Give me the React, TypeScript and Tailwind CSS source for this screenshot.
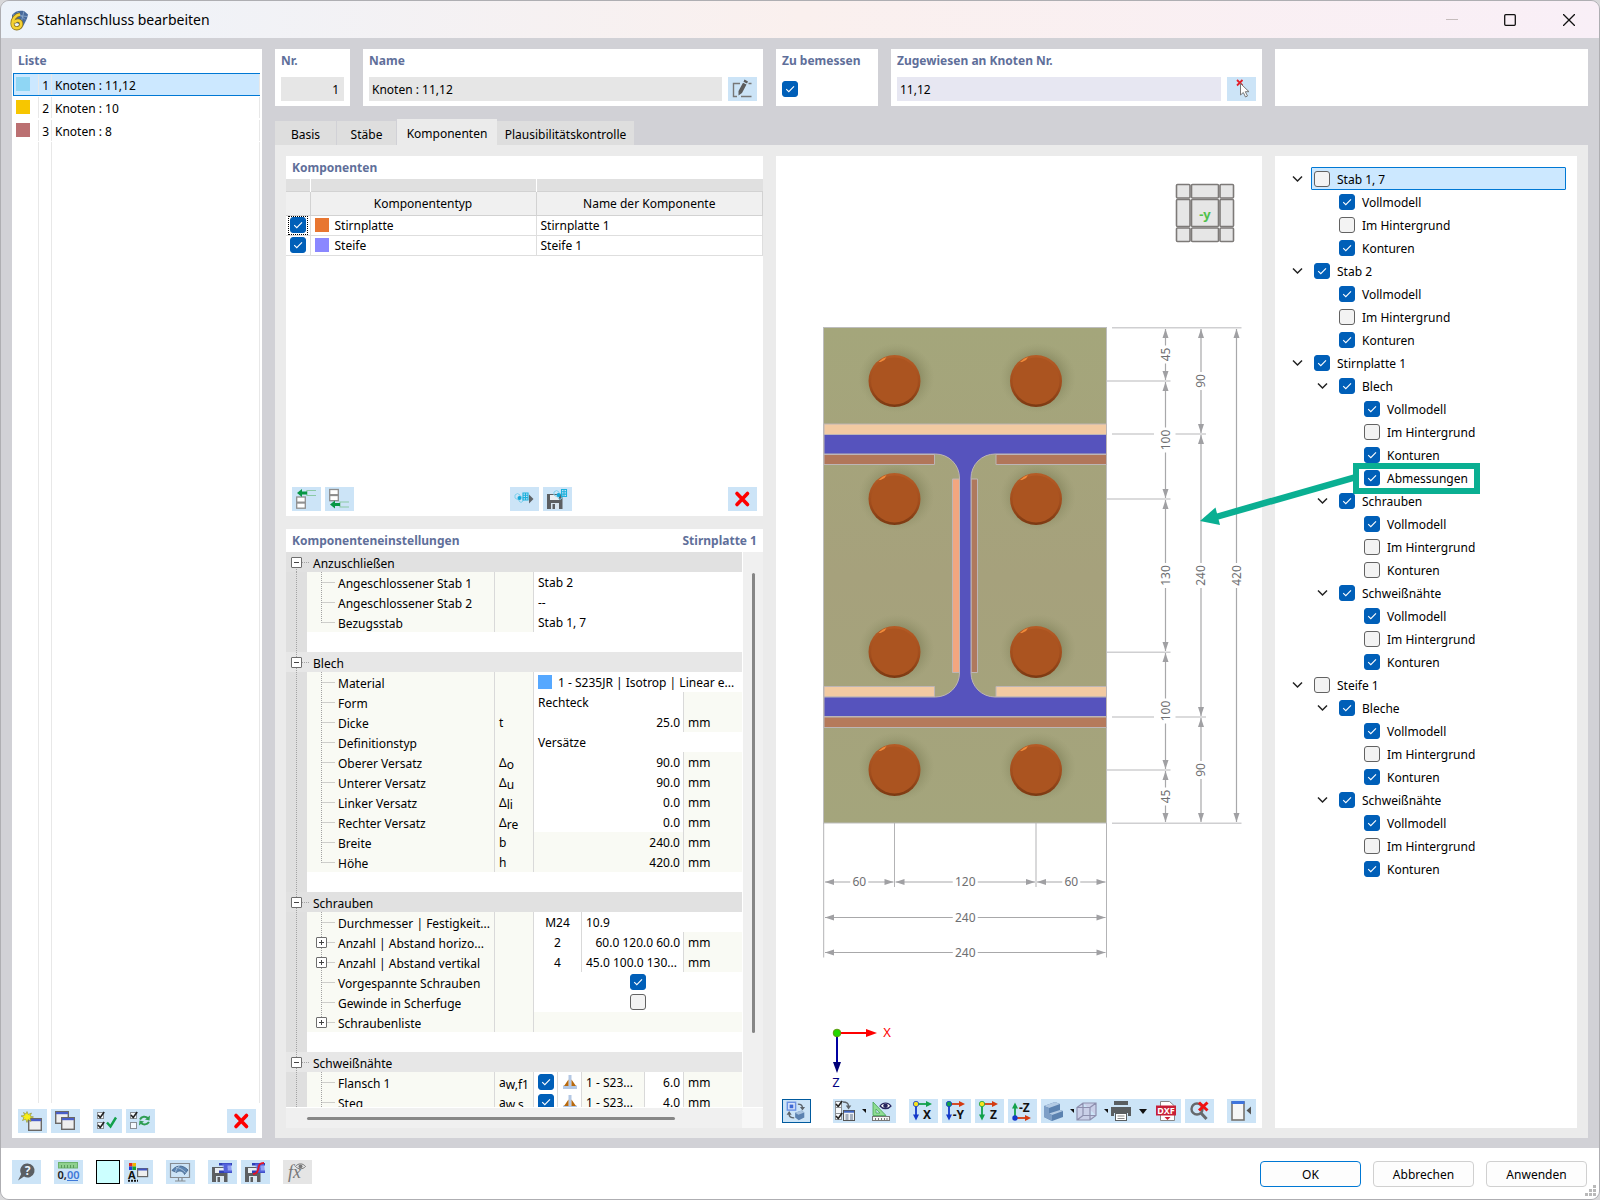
import { useState } from "react";
import type { ReactNode } from "react";

interface CheckProps {
  id?: string;
  label?: string;
  checked?: boolean;
}

const Check = ({ id, label, checked = false }: CheckProps) => {
  const [value, setValue] = useState(checked);
  return (
    <span className="relative block size-4 shrink-0">
      <input
        type="checkbox"
        id={id}
        aria-label={label}
        checked={value}
        onChange={(e) => setValue(e.target.checked)}
        className="block size-4 appearance-none rounded-[3px] border border-[#626262] bg-[#f3f3f3] checked:border-[#005fb8] checked:bg-[#005fb8]"
      />
      {value && (
        <svg viewBox="0 0 16 16" className="pointer-events-none absolute inset-0 size-4">
          <path d="M4.2 8.2 6.8 10.7 12 5.3" fill="none" stroke="#fff" strokeWidth="1.1" />
        </svg>
      )}
    </span>
  );
};

interface IconButtonProps {
  title: string;
  children: ReactNode;
  className?: string;
}

const IconButton = ({ title, children, className = "bg-[#cce4f7]" }: IconButtonProps) => (
  <button type="button" title={title} className={`block h-6 w-[29px] shrink-0 ${className}`}>
    <svg viewBox="0 0 29 24" className="block h-full w-full" fill="none">
      {children}
    </svg>
  </button>
);

/* ---------- icon drawings, all on a 29x24 field ---------- */

const DeleteIcon = () => (
  <path d="M9 6.5 19.5 17.5M19.5 6.5 9 17.5" stroke="#fe0000" strokeWidth="3.6" strokeLinecap="round" />
);

const MiniWindow = ({ x, y }: { x: number; y: number }) => (
  <g>
    <rect x={x + 0.7} y={y + 0.7} width="12.6" height="11.6" fill="#efefef" stroke="#6a6866" strokeWidth="1.4" />
    <rect x={x + 1} y={y + 1} width="12" height="2.2" fill="#4a5ec8" />
  </g>
);

const NewIcon = () => (
  <>
    <MiniWindow x={10} y={9} />
    <path
      d="M9 2.5 10.2 5.5 13.500 4 12 7 15.500 8 12 9.200 13 12.500 10 10.500 9 13.500 7.700 10.200 4.500 11.500 6 8.500 3 7 6.700 6.200 5.500 3.500 8 5Z"
      fill="#f8ef16"
      stroke="#8c8b35"
      strokeWidth="0.6"
    />
  </>
);

const CopyIcon = () => (
  <>
    <MiniWindow x={4} y={2} />
    <MiniWindow x={10} y={8} />
  </>
);

const TinyBox = ({ x, y, on = true }: { x: number; y: number; on?: boolean }) => (
  <g>
    <rect x={x + 0.5} y={y + 0.5} width="6" height="6" fill="#f5f9fc" stroke="#8a8f94" />
    {on && <path d={`M${x + 1} ${y + 3}l2.200 2.500 4-5.500`} stroke="#222" strokeWidth="1.6" />}
  </g>
);

const CheckAllIcon = () => (
  <>
    <TinyBox x={4} y={3} />
    <TinyBox x={4} y={13} />
    <path d="M14 13.5 17.500 17.500 23 8.500" stroke="#12a14b" strokeWidth="2.4" />
  </>
);

const InvertIcon = () => (
  <>
    <TinyBox x={4} y={3} />
    <TinyBox x={4} y={13} on={false} />
    <path d="M14 10.500C15.500 7 19.500 7 22 9M23 13C21 16 17.500 16 15 14" stroke="#2e9d53" strokeWidth="2" />
    <path d="M24 6.500 23.500 11.500 19 10.500ZM13 16.500 13.500 11.500 18 12.500Z" fill="#2e9d53" />
  </>
);

const RowBoxes = ({ ys }: { ys: number[] }) => (
  <>
    {ys.map((y) => (
      <rect key={y} x="4.700" y={y} width="8.600" height="5.200" fill="#fff" stroke="#8d8d8d" strokeWidth="1.3" />
    ))}
  </>
);

const InsertAboveIcon = () => (
  <>
    <RowBoxes ys={[10, 16]} />
    <path d="M24 3.500h-9v5h9" stroke="#8bc9a5" strokeWidth="1.2" />
    <path d="M5 6 10 2v2.500h5v3h-5V10Z" fill="#079744" />
  </>
);

const InsertBelowIcon = () => (
  <>
    <RowBoxes ys={[2.5, 8.5]} />
    <path d="M24 15h-9v5h9" stroke="#8bc9a5" strokeWidth="1.2" />
    <path d="M5 17.500 10 13.500V16h5v3h-5v2.500Z" fill="#079744" />
  </>
);

const Grid = ({ x, y }: { x: number; y: number }) => (
  <path
    d={`M${x} ${y}h5v7h-5zM${x + 2.5} ${y}v7M${x} ${y + 2.3}h5M${x} ${y + 4.6}h5`}
    stroke="#1bb1dd"
    strokeWidth="1.1"
  />
);

const Blocks = ({ x, y }: { x: number; y: number }) => (
  <>
    <path
      d={`M${x} ${y}l2.500-1.500 2.500 1.500v3l-2.500 1.500-2.500-1.500zM${x + 4} ${y + 3}l2-1.500 2 1.500v3l-2 1.500-2-1.500z`}
      stroke="#7ed0ec"
      strokeWidth="1"
    />
    <circle cx={x + 4.5} cy={y + 3} r="2" fill="#12a7d8" />
  </>
);

const ImportIcon = () => (
  <>
    <Blocks x={5} y={8} />
    <Grid x={13} y={6} />
    <path d="M19 7.500 23.500 12 19 16.500Z" fill="#5f6468" />
  </>
);

const Floppy = () => (
  <>
    <path d="M4 7h14l1.500 1.500V22H4Z" fill="#5c5f62" />
    <rect x="7" y="8" width="9" height="5" fill="#e9eef2" />
    <rect x="8" y="16" width="8" height="6" fill="#d9e6f0" />
    <rect x="9.500" y="17" width="2.500" height="5" fill="#5c5f62" />
  </>
);

const SaveBlockIcon = () => (
  <>
    <Floppy />
    <Blocks x={11} y={5} />
    <Grid x={18.5} y={2.5} />
  </>
);

const EditIcon = () => (
  <>
    <path d="M12 6.500H5.500v13H9M13 19.500h10.500M20.500 6.500h3" stroke="#777" strokeWidth="1.4" />
    <path d="M16.500 2.500 20 4.500 19 6.500 15.500 4.700ZM15 5.700 18.500 7.500 14 16 10.500 18.500 10.500 14Z" fill="#5c5c5c" />
  </>
);

const PickIcon = () => (
  <>
    <path d="M10 3 15.500 8.500M15.500 3 10 8.500" stroke="#e3202a" strokeWidth="1.8" />
    <path d="M13.500 6.500v11.500l2.800-2.500 2.200 4.500 2-1-2.200-4.300h3.700Z" fill="#fff" stroke="#777" strokeWidth="1" />
  </>
);

const HelpIcon = () => (
  <>
    <path d="M15.500 3.500a7 7 0 1 1-3.500 13l-6 4 3.200-6.500A7 7 0 0 1 15.500 3.500Z" fill="#5b5f63" />
    <text x="15.500" y="15" fontSize="12" fontWeight="700" textAnchor="middle" fill="#e9f3fb">
      ?
    </text>
  </>
);

const UnitsIcon = () => (
  <>
    <rect x="4.500" y="2.500" width="19" height="5.500" fill="#8fd08e" stroke="#6bb26c" />
    <path d="M7.500 5v3M10.500 5v3M13.500 5v3M16.500 5v3M19.500 5v3" stroke="#5a9c5b" />
    <text x="3.500" y="18.500" fontSize="11" fontWeight="600" fill="#222">
      0,
      <tspan fill="#3f79d8">00</tspan>
    </text>
    <path d="M13 20.500h11" stroke="#3f79d8" />
  </>
);

const DisplayPropsIcon = () => (
  <>
    <path d="M5 3h3.500v3.500H5z" fill="#e12a20" />
    <path d="M8.500 3H12v3.500H8.500z" fill="#f2b400" />
    <path d="M5 6.500h3.500V10H5z" fill="#2040d8" />
    <path d="M8.500 6.500H12V10H8.500z" fill="#18a22c" />
    <text x="4" y="19" fontSize="11" fontWeight="700" fill="#111">
      A
    </text>
    <path d="M4 20.700h10" stroke="#111" strokeWidth="2" strokeDasharray="2 1" />
    <rect x="13.600" y="8.600" width="10" height="8" fill="#eee" stroke="#666" strokeWidth="1.200" />
    <path d="M14 9.500h9" stroke="#3f55c4" strokeWidth="2" />
  </>
);

const MonitorIcon = () => (
  <>
    <path d="M4.500 3.500h19v14h-19zM12.500 18v2.500M16 18v2.500M9 21h10.500" stroke="#868c92" strokeWidth="1.2" />
    <path d="M6 10.500C9 6 16 3.500 22 10L18.500 14.500c-1-3-5-5-8-2Z" fill="#5d86b3" stroke="#3f5f85" strokeWidth="0.8" />
    <path d="M10 7.500c3 0 7 2 9.500 5M14 5.500c-3 2-4 4-4.500 7" stroke="#b7cbe0" strokeWidth="0.8" />
  </>
);

const SaveProfileIcon = ({ red = false }: { red?: boolean }) => (
  <>
    <Floppy />
    <path d="M11 3h13v2.500h-4.500v5H24V13H11v-2.500h5v-5h-5Z" fill="#2f3fb8" />
    <path d="M14 3.500h9l1 9h-8Z" fill="#6c78f2" opacity="0.6" />
    {red && <path d="M23 3c-6 0-5 4-6 7s-2 4-5 4" stroke="#e0142a" strokeWidth="1.8" />}
  </>
);

const FormulaIcon = () => (
  <>
    <text x="5" y="18" fontSize="18" fontStyle="italic" className="font-['Liberation_Serif',serif]" fill="#777">
      fx
    </text>
    <path d="M12.500 6.500c2.500-3.500 7.500-3.500 10 0-2.500 3-7.500 3-10 0Z" fill="#e4e4e4" stroke="#777" />
    <circle cx="17.500" cy="6.300" r="1.900" fill="#777" />
  </>
);

const SwapViewIcon = () => (
  <>
    <rect x="4.500" y="2.500" width="9" height="8.500" fill="#dbe6fa" stroke="#6d94e4" strokeWidth="1.6" />
    <path d="M7 5h4v4H7z" fill="#3d69d4" />
    <path d="M16 4.500c3.500 0 5 1.500 5 4M12 19.500c-4 0-5.500-1-5.500-4" stroke="#5d646b" strokeWidth="1.5" />
    <path d="M18.300 7.500h5.500L21 11.500ZM3.700 16h5.500l-2.700-4Z" fill="#5d646b" />
    <path d="M13 14 20 11.500l3 2v5.500L17 22l-4-3Z" fill="#5b82b0" />
    <path d="M13 14 20 11.500l3 2-6.500 2.500Z" fill="#a9c3df" />
  </>
);

const ListViewIcon = () => (
  <>
    <TinyBox x={2} y={2} />
    <TinyBox x={2} y={8} on={false} />
    <TinyBox x={2} y={14} />
    <path d="M10 3c4 0 5.500 1.500 5.500 4" stroke="#5d646b" strokeWidth="1.4" />
    <path d="M12.800 6.500h5.500L15.500 10.500Z" fill="#5d646b" />
    <rect x="10.500" y="11.500" width="11" height="10" fill="#eef2f5" stroke="#555" />
    <path d="M11 12.700h10" stroke="#3f66c0" strokeWidth="2" />
    <path d="M12.500 16h3M17 16h3M12.500 18h3M17 18h3M12.500 20h3M17 20h3" stroke="#5a6d86" />
  </>
);

const RulerIcon = () => (
  <>
    <path d="M6 3v13.500h13Z" fill="#8fdc93" stroke="#43a350" strokeWidth="0.8" />
    <path d="M9 10v4h4Z" fill="#cce4f7" stroke="#43a350" strokeWidth="0.7" />
    <rect x="5.500" y="17.500" width="17" height="4" fill="#f5f5f5" stroke="#777" />
    <path d="M8.500 19v3M11.500 19v3M14.500 19v3M17.500 19v3M20 19v3" stroke="#777" />
    <path d="M13 7c3-4 8-4 11 0-3 3.500-8 3.500-11 0Z" fill="#fff" stroke="#25255e" strokeWidth="1.2" />
    <circle cx="18.500" cy="6.800" r="2.300" fill="#25255e" />
  </>
);

interface AxisIconProps {
  label: string;
  dot: string;
  across: string;
  down: string;
  up?: boolean;
}

const AxisIcon = ({ label, dot, across, down, up = false }: AxisIconProps) =>
  up ? (
    <>
      <path d="M7 19V8" stroke={down} strokeWidth="1.8" />
      <path d="M4 9.500h6L7 3.500Z" fill={down} />
      <path d="M7 19h11" stroke={across} strokeWidth="1.8" />
      <path d="M17 16v6l6-3Z" fill={across} />
      <circle cx="7" cy="19" r="2.700" fill={dot} />
      <text x="11" y="13" fontSize="12" fontWeight="700" fill="#111">
        {label}
      </text>
    </>
  ) : (
    <>
      <path d="M7 5v11" stroke={down} strokeWidth="1.8" />
      <path d="M4 15.500h6L7 21.500Z" fill={down} />
      <path d="M7 5h11" stroke={across} strokeWidth="1.8" />
      <path d="M17 2v6l6-3Z" fill={across} />
      <circle cx="7" cy="5" r="2.700" fill={dot} stroke={down} strokeWidth="0.8" />
      <text x="22" y="20" fontSize="12" fontWeight="700" textAnchor="end" fill="#111">
        {label}
      </text>
    </>
  );

const SolidIcon = () => (
  <>
    <path d="M3 7 14 3l5 2v6l3 1v6l-11 4-8-4Z" fill="#5b82b0" />
    <path d="M3 7 14 3l5 2-11 4ZM8 14.500 19 11l3 1-11 4Z" fill="#b3cbe4" />
    <path d="M3 7l5 2v5.500l3 1.500v6l-8-4Z" fill="#7d9fc7" />
  </>
);

const WireCubeIcon = () => (
  <path
    d="M2 8.500 8 4h13v12.500L15 21H2ZM2 8.500h13V21M15 8.500 21 4M8 4v12.500h13M8 16.500 2 21"
    fill="#c9cfe8"
    stroke="#8d8fae"
    strokeWidth="1.2"
  />
);

const PrinterIcon = () => (
  <>
    <rect x="5" y="2" width="14" height="4" fill="#595d60" />
    <path d="M2 8h20v9h-3v-3H5v3H2Z" fill="#595d60" />
    <rect x="6.500" y="14.500" width="11" height="7" fill="#fff" stroke="#595d60" />
    <path d="M8.500 17h7M8.500 19.500h7" stroke="#888" />
  </>
);

const DxfIcon = () => (
  <>
    <path d="M8.500 2.500h9l5 4.500v14.500h-14Z" fill="#fff" stroke="#888" />
    <rect x="4" y="6.500" width="20" height="10" fill="#c71f37" />
    <text x="14" y="15" fontSize="9" fontWeight="700" textAnchor="middle" fill="#fff">
      DXF
    </text>
    <path d="M12.500 18h6l-3 3Z" fill="#c71f37" />
  </>
);

const ZoomOffIcon = () => (
  <>
    <circle cx="12" cy="10" r="5.500" stroke="#66696c" strokeWidth="2.4" />
    <path d="M15.500 13.500 21.500 20" stroke="#66696c" strokeWidth="3" />
    <path d="M14 3.500 22.500 11.500M22.500 3.500 14 11.500" stroke="#f01212" strokeWidth="3" />
  </>
);

const PanelIcon = () => (
  <>
    <rect x="5" y="3" width="12" height="18" fill="#f6f6f6" stroke="#77736e" strokeWidth="1.6" />
    <path d="M4.500 3.500h13" stroke="#3f74dc" strokeWidth="3" />
    <path d="M24 7.500v8L19.500 11.500Z" fill="#555" />
  </>
);

/* ---------- header ---------- */

const TitleBar = () => (
  <header className="flex h-[37px] shrink-0 items-center bg-gradient-to-r from-[#edf3fa] via-[#faf0ee] to-[#f9eff7]">
    <svg viewBox="0 0 20 22" className="ml-2 h-[22px] w-5" fill="none">
      <path d="M3 6C6 2 10 1 15 2l4 3.500-1 4-4 8-5-3-6-3Z" fill="#47699b" />
      <path d="M4 6l14 1.500M8 2.500l8 8M15 2l-3 12" stroke="#8fadd0" strokeWidth="0.8" />
      <path
        d="M11 5.500C6.500 6 3.500 10 3.500 14.500c0 3 1.800 4.800 4.300 4.800s4.400-1.700 4.400-4.200c0-2.200-1.500-3.600-3.500-3.600-1.600 0-2.800.8-3.600 2.200"
        stroke="#8a731f"
        strokeWidth="4.2"
      />
      <path
        d="M11 5.500C6.500 6 3.500 10 3.500 14.500c0 3 1.800 4.800 4.300 4.800s4.400-1.700 4.400-4.200c0-2.200-1.500-3.600-3.500-3.600-1.600 0-2.800.8-3.600 2.200"
        stroke="#f6d233"
        strokeWidth="2.6"
      />
    </svg>
    <h1 className="ml-2 flex-1 text-[14px]">Stahlanschluss bearbeiten</h1>
    <div className="flex">
      <button type="button" title="Minimieren" className="w-[58px]">
        <svg viewBox="0 0 12 12" className="mx-auto size-3">
          <path d="M0 5.500h12" stroke="#c5bcbc" />
        </svg>
      </button>
      <button type="button" title="Maximieren" className="w-[58px]">
        <svg viewBox="0 0 12 12" className="mx-auto size-3" fill="none">
          <rect x="0.700" y="0.700" width="10.600" height="10.600" rx="1" stroke="#111" strokeWidth="1.3" />
        </svg>
      </button>
      <button type="button" title="Schließen" className="w-[60px]">
        <svg viewBox="0 0 12 12" className="mx-auto size-3" fill="none">
          <path d="M0 0 12 12M12 0 0 12" stroke="#111" strokeWidth="1.3" />
        </svg>
      </button>
    </div>
  </header>
);

const Heading = ({ children }: { children: ReactNode }) => (
  <h2 className="h-[23px] shrink-0 px-1.5 leading-[23px] font-bold text-[#5f6f9a]">{children}</h2>
);

const knots = [
  { no: 1, name: "Knoten : 11,12", color: "bg-[#8fd6f4]", active: true },
  { no: 2, name: "Knoten : 10", color: "bg-[#f7c600]", active: false },
  { no: 3, name: "Knoten : 8", color: "bg-[#bb7072]", active: false },
];

const ListPanel = () => (
  <aside className="flex w-[250px] shrink-0 flex-col bg-white">
    <Heading>Liste</Heading>
    <div className="mt-px flex min-h-0 flex-1 flex-col px-px">
      {knots.map((k) => (
        <button
          key={k.no}
          type="button"
          className={`mr-px flex h-[23px] shrink-0 items-stretch border border-r-0 text-left ${
            k.active ? "border-[#0078d4] bg-[#cce8ff]" : "border-transparent"
          }`}
        >
          <span className="w-6 pt-[3px] pl-0.5">
            <span className={`block size-3.5 ${k.color}`} />
          </span>
          <span className="w-[13px] border-l border-[#e8e8e8] pr-0.5 text-right leading-[23px]">{k.no}</span>
          <span className="flex-1 border-x border-[#e8e8e8] pl-[3px] leading-[23px]">{k.name}</span>
        </button>
      ))}
      <div className="flex flex-1">
        <span className="w-[25px]" />
        <span className="w-[13px] border-l border-[#e8e8e8]" />
        <span className="mr-px flex-1 border-x border-[#e8e8e8]" />
      </div>
    </div>
    <div className="mt-1.5 mb-[5px] flex gap-1 px-1.5">
      <IconButton title="Neu">
        <NewIcon />
      </IconButton>
      <IconButton title="Kopieren">
        <CopyIcon />
      </IconButton>
      <div className="ml-[9px] flex gap-1">
        <IconButton title="Alle auswählen">
          <CheckAllIcon />
        </IconButton>
        <IconButton title="Auswahl umkehren">
          <InvertIcon />
        </IconButton>
      </div>
      <div className="ml-auto">
        <IconButton title="Löschen">
          <DeleteIcon />
        </IconButton>
      </div>
    </div>
  </aside>
);

interface FieldBoxProps {
  label: string;
  htmlFor: string;
  className: string;
  children: ReactNode;
}

const FieldBox = ({ label, htmlFor, className, children }: FieldBoxProps) => (
  <div className={`bg-white ${className}`}>
    <label htmlFor={htmlFor} className="block h-[23px] px-1.5 leading-[23px] font-bold text-[#5f6f9a]">
      {label}
    </label>
    <div className="mt-[5px] flex h-6 gap-1.5 px-1.5">{children}</div>
  </div>
);

const HeaderFields = () => (
  <div className="grid h-[57px] shrink-0 grid-cols-[488px_minmax(0,1fr)_313px] gap-[13px]">
    <div className="flex gap-[13px]">
      <FieldBox label="Nr." htmlFor="nr" className="w-[75px]">
        <input id="nr" defaultValue="1" className="w-full bg-[#e6e6e6] pt-0.5 pr-[5px] text-right" />
      </FieldBox>
      <FieldBox label="Name" htmlFor="name" className="flex-1">
        <input id="name" defaultValue="Knoten : 11,12" className="min-w-0 flex-1 bg-[#e6e6e6] pt-0.5 pl-[3px]" />
        <IconButton title="Name bearbeiten">
          <EditIcon />
        </IconButton>
      </FieldBox>
    </div>
    <div className="flex gap-[13px]">
      <FieldBox label="Zu bemessen" htmlFor="design" className="w-[102px]">
        <div className="flex items-center">
          <Check id="design" checked />
        </div>
      </FieldBox>
      <FieldBox label="Zugewiesen an Knoten Nr." htmlFor="assigned" className="flex-1">
        <input id="assigned" defaultValue="11,12" className="min-w-0 flex-1 bg-[#e7e7f2] pt-0.5 pl-[3px]" />
        <IconButton title="Knoten wählen">
          <PickIcon />
        </IconButton>
      </FieldBox>
    </div>
    <div className="bg-white" />
  </div>
);

const tabs = ["Basis", "Stäbe", "Komponenten", "Plausibilitätskontrolle"];
const tabWidths = ["w-[62px]", "w-[60px]", "w-[100px]", "w-[138px]"];

const Tabs = () => {
  const [active, setActive] = useState(2);
  return (
    <div role="tablist" className="mt-[13px] flex h-[26px] shrink-0 items-end">
      {tabs.map((tab, i) => (
        <button
          key={tab}
          type="button"
          role="tab"
          aria-selected={i === active}
          onClick={() => setActive(i)}
          className={`${tabWidths[i]} ${
            i === active ? "h-[26px] bg-[#ebebeb] pt-1" : "h-6 border-r border-[#d1d1d6] bg-[#dedede] pt-1"
          }`}
        >
          {tab}
        </button>
      ))}
    </div>
  );
};

/* ---------- component table ---------- */

const components = [
  { type: "Stirnplatte", name: "Stirnplatte 1", color: "bg-[#e87631]", focus: true },
  { type: "Steife", name: "Steife 1", color: "bg-[#8a87ff]", focus: false },
];

const ComponentsPanel = () => (
  <section className="flex h-[360px] shrink-0 flex-col bg-white">
    <Heading>Komponenten</Heading>
    <table className="w-full table-fixed border-collapse">
      <colgroup>
        <col className="w-6" />
        <col className="w-[226px]" />
        <col />
      </colgroup>
      <thead>
        <tr className="h-3 bg-[#e0e0e0]">
          <th className="border-r border-white" />
          <th className="border-r border-white" />
          <th />
        </tr>
        <tr className="h-6 border-y border-[#d2d2d2] bg-[#f0f0f0]">
          <th className="border-r border-[#d2d2d2]" />
          <th className="border-r border-[#d2d2d2] pt-0.5 font-normal">Komponententyp</th>
          <th className="border-r border-[#d2d2d2] pt-0.5 font-normal">Name der Komponente</th>
        </tr>
      </thead>
      <tbody>
        {components.map((c) => (
          <tr key={c.name} className="h-5 border-b border-[#dedede]">
            <td className="border-r border-[#dedede]">
              <div
                className={`ml-0.5 flex h-[19px] w-5 items-center justify-center border border-dotted ${
                  c.focus ? "border-black" : "border-transparent"
                }`}
              >
                <Check label={c.name} checked />
              </div>
            </td>
            <td className="border-r border-[#dedede]">
              <div className="flex items-center gap-1.5 pl-1">
                <span className={`size-3.5 ${c.color}`} />
                <span className="pt-0.5">{c.type}</span>
              </div>
            </td>
            <td className="border-r border-[#dedede] pt-0.5 pl-1">{c.name}</td>
          </tr>
        ))}
      </tbody>
    </table>
    <div className="mt-auto mb-[5px] flex justify-between px-1.5">
      <div className="flex gap-1">
        <IconButton title="Darüber einfügen">
          <InsertAboveIcon />
        </IconButton>
        <IconButton title="Darunter einfügen">
          <InsertBelowIcon />
        </IconButton>
      </div>
      <div className="flex gap-1">
        <IconButton title="Komponente laden">
          <ImportIcon />
        </IconButton>
        <IconButton title="Komponente speichern">
          <SaveBlockIcon />
        </IconButton>
      </div>
      <IconButton title="Komponente löschen">
        <DeleteIcon />
      </IconButton>
    </div>
  </section>
);

/* ---------- settings grid ---------- */

const pale = "bg-[#f9faf4]";
const line = "border-r border-[#d9d9d9]";
const dots = { stroke: "#a3a3a3", strokeWidth: 1, strokeDasharray: "1 1" };

const Expander = ({ plus = false }: { plus?: boolean }) => (
  <>
    <rect x="5.500" y="5.500" width="10" height="10" rx="0.500" fill="#fff" stroke="#6d6d6d" />
    <path d={plus ? "M8 10.500h5M10.500 8v5" : "M8 10.500h5"} stroke="#444" />
  </>
);

interface RowProps {
  name: string;
  symbol?: ReactNode;
  plus?: boolean;
  last?: boolean;
  children?: ReactNode;
}

const Row = ({ name, symbol, plus, last, children }: RowProps) => (
  <tr>
    <td className="bg-[#dfdfdf]">
      <svg className="block h-5 w-[21px]">
        <path d="M10.500 0v20" {...dots} />
      </svg>
    </td>
    <td className={`${pale} ${line}`}>
      <div className="flex h-5 overflow-hidden whitespace-nowrap">
        <svg viewBox="4 0 31 20" className="h-5 w-[31px] shrink-0" fill="none">
          <path d={last ? "M18.500 0v10.500" : "M18.500 0v20"} {...dots} />
          <path d="M18.500 10.500h13" {...dots} />
          {plus && (
            <g transform="translate(8 0)">
              <Expander plus />
            </g>
          )}
        </svg>
        <span className="pt-0.5 leading-[19px]">{name}</span>
      </div>
    </td>
    <td className={`${pale} ${line} pt-0.5 pl-1 leading-4 whitespace-nowrap`}>{symbol}</td>
    {children}
  </tr>
);

const Sub = ({ base, sub }: { base: string; sub: string }) => (
  <>
    {base}
    <sub className="bottom-[-2px] text-[12px]">{sub}</sub>
  </>
);

const Unit = ({ children }: { children?: ReactNode }) => <td className={`${pale} pt-0.5 pl-1`}>{children}</td>;

const Measure = ({ value, locked = false }: { value: string; locked?: boolean }) => (
  <>
    <td colSpan={4} className={`${line} pt-0.5 pr-[3px] text-right ${locked ? pale : "bg-white"}`}>
      {value}
    </td>
    <Unit>mm</Unit>
  </>
);

const Plain = ({ children }: { children?: ReactNode }) => (
  <td colSpan={5} className="bg-white pt-0.5 pl-1">
    {children}
  </td>
);

const Group = ({ name, dark = false, first = false }: { name: string; dark?: boolean; first?: boolean }) => (
  <tr>
    <th colSpan={8} className={`text-left font-normal ${dark ? "bg-[#e1e1e1]" : "bg-[#e7e7e7]"}`}>
      <button type="button" className="flex h-5 w-full text-left">
        <svg className="h-5 w-[27px]" fill="none">
          <path d={first ? "M10.500 15v5" : "M10.500 0v20"} {...dots} />
          <path d="M16 10.500h8" {...dots} />
          <Expander />
        </svg>
        <span className="pt-0.5 leading-[19px]">{name}</span>
      </button>
    </th>
  </tr>
);

const Gap = () => (
  <tr>
    <td className="bg-[#dfdfdf]">
      <svg className="block h-5 w-[21px]">
        <path d="M10.500 0v20" {...dots} />
      </svg>
    </td>
    <td colSpan={7} className="bg-white" />
  </tr>
);

const Weld = ({ name, sub, value }: { name: string; sub: string; value: string }) => (
  <Row name={name} symbol={<Sub base="a" sub={sub} />}>
    <td className={`${line} bg-white`}>
      <div className="flex justify-center">
        <Check label={name} checked />
      </div>
    </td>
    <td className={`${line} bg-white`}>
      <svg viewBox="0 0 14 14" className="mx-auto size-3.5">
        <path d="M5.500 0h3v10.500h-3ZM0 10.500h14V14H0Z" fill="#b4c8e4" />
        <path d="M5.500 4.500v6.500H1ZM8.500 4.500v6.500H13Z" fill="#b8690d" />
      </svg>
    </td>
    <td className={`${line} ${pale} pt-0.5 pl-1 whitespace-nowrap`}>1 - S23...</td>
    <td className={`${line} bg-white pt-0.5 pr-[3px] text-right`}>{value}</td>
    <Unit>mm</Unit>
  </Row>
);

const SettingsPanel = () => (
  <section className="mt-[13px] flex min-h-0 flex-1 flex-col bg-white">
    <div className="flex justify-between">
      <Heading>Komponenteneinstellungen</Heading>
      <Heading>Stirnplatte 1</Heading>
    </div>
    <div className="flex min-h-0 flex-1">
      <div className="min-h-0 flex-1 overflow-hidden">
        <table className="w-full table-fixed border-separate border-spacing-0 leading-[18px]">
          <colgroup>
            <col className="w-[21px]" />
            <col className="w-[188px]" />
            <col className="w-[39px]" />
            <col className="w-6" />
            <col className="w-6" />
            <col className="w-[63px]" />
            <col className="w-[39px]" />
            <col />
          </colgroup>
          <tbody>
            <Group name="Anzuschließen" dark first />
            <Row name="Angeschlossener Stab 1">
              <Plain>Stab 2</Plain>
            </Row>
            <Row name="Angeschlossener Stab 2">
              <Plain>--</Plain>
            </Row>
            <Row name="Bezugsstab" last>
              <Plain>Stab 1, 7</Plain>
            </Row>
            <Gap />
            <Group name="Blech" />
            <Row name="Material">
              <Plain>
                <span className="flex items-start gap-1.5 overflow-hidden whitespace-nowrap">
                  <span className="mt-px size-3.5 shrink-0 bg-[#56a8ff]" />
                  1 - S235JR | Isotrop | Linear e...
                </span>
              </Plain>
            </Row>
            <Row name="Form">
              <td colSpan={4} className={`${line} bg-white pt-0.5 pl-1`}>
                Rechteck
              </td>
              <Unit />
            </Row>
            <Row name="Dicke" symbol="t">
              <Measure value="25.0" />
            </Row>
            <Row name="Definitionstyp">
              <Plain>Versätze</Plain>
            </Row>
            <Row name="Oberer Versatz" symbol={<Sub base="Δ" sub="o" />}>
              <Measure value="90.0" />
            </Row>
            <Row name="Unterer Versatz" symbol={<Sub base="Δ" sub="u" />}>
              <Measure value="90.0" />
            </Row>
            <Row name="Linker Versatz" symbol={<Sub base="Δ" sub="li" />}>
              <Measure value="0.0" />
            </Row>
            <Row name="Rechter Versatz" symbol={<Sub base="Δ" sub="re" />}>
              <Measure value="0.0" />
            </Row>
            <Row name="Breite" symbol="b">
              <Measure value="240.0" locked />
            </Row>
            <Row name="Höhe" symbol="h" last>
              <Measure value="420.0" locked />
            </Row>
            <Gap />
            <Group name="Schrauben" dark />
            <Row name="Durchmesser | Festigkeit...">
              <td colSpan={2} className={`${line} bg-white pt-0.5 text-center`}>
                M24
              </td>
              <td colSpan={3} className="bg-white pt-0.5 pl-1">
                10.9
              </td>
            </Row>
            <Row name="Anzahl | Abstand horizo..." plus>
              <td colSpan={2} className={`${line} bg-white pt-0.5 text-center`}>
                2
              </td>
              <td colSpan={2} className={`${line} bg-white pt-0.5 pr-[3px] text-right whitespace-nowrap`}>
                60.0 120.0 60.0
              </td>
              <Unit>mm</Unit>
            </Row>
            <Row name="Anzahl | Abstand vertikal" plus>
              <td colSpan={2} className={`${line} bg-white pt-0.5 text-center`}>
                4
              </td>
              <td colSpan={2} className={`${line} bg-white pt-0.5 pl-1 whitespace-nowrap`}>
                45.0 100.0 130...
              </td>
              <Unit>mm</Unit>
            </Row>
            <Row name="Vorgespannte Schrauben">
              <td colSpan={5} className="bg-white">
                <div className="flex justify-center">
                  <Check label="Vorgespannte Schrauben" checked />
                </div>
              </td>
            </Row>
            <Row name="Gewinde in Scherfuge">
              <td colSpan={5} className="bg-white">
                <div className="flex justify-center">
                  <Check label="Gewinde in Scherfuge" />
                </div>
              </td>
            </Row>
            <Row name="Schraubenliste" plus last>
              <td colSpan={5} className={pale} />
            </Row>
            <Gap />
            <Group name="Schweißnähte" />
            <Weld name="Flansch 1" sub="w,f1" value="6.0" />
            <Weld name="Steg" sub="w,s" value="4.0" />
          </tbody>
        </table>
      </div>
      <div className="ml-px flex w-5 justify-center bg-[#f0f0f0] pt-[21px]">
        <span className="h-[460px] w-[3px] rounded-full bg-[#868686]" />
      </div>
    </div>
    <div className="mt-px flex h-5 shrink-0">
      <div className="flex flex-1 items-center bg-[#f0f0f0] pl-[21px]">
        <span className="h-[3px] w-[368px] rounded-full bg-[#868686]" />
      </div>
      <div className="w-[21px] bg-[#f7f7f7]" />
    </div>
  </section>
);

/* ---------- model view ---------- */

const boltRows = [381, 499, 652, 770];
const boltCols = [894.5, 1036];

interface DimProps {
  at: number;
  from: number;
  to: number;
  text: string;
}

const VDim = ({ at, from, to, text }: DimProps) => {
  const mid = (from + to) / 2;
  const half = text.length * 3.5 + 2;
  return (
    <g>
      <path d={`M${at} ${from + 1}V${mid - half}M${at} ${mid + half}V${to - 1}`} stroke="#a8a8aa" strokeWidth="1.2" />
      <path d={`M${at} ${from + 1}l3 9h-6zM${at} ${to - 1}l3-9h-6z`} fill="#a0a0a3" />
      <text transform={`translate(${at + 4} ${mid}) rotate(-90)`} textAnchor="middle" fontSize="12" fill="#6f6f72">
        {text}
      </text>
    </g>
  );
};

const HDim = ({ at, from, to, text }: DimProps) => {
  const mid = (from + to) / 2;
  const half = text.length * 3.5 + 2;
  return (
    <g>
      <path d={`M${from + 1} ${at}H${mid - half}M${mid + half} ${at}H${to - 1}`} stroke="#a8a8aa" strokeWidth="1.2" />
      <path d={`M${from + 1} ${at}l9-3v6zM${to - 1} ${at}l-9-3v6z`} fill="#a0a0a3" />
      <text x={mid} y={at + 4} textAnchor="middle" fontSize="12" fill="#6f6f72">
        {text}
      </text>
    </g>
  );
};

const Cube = () => (
  <g fill="#e6e6e6" stroke="#7d7a78" strokeWidth="1.6">
    {[
      [1176.5, 13.5],
      [1191.5, 27],
      [1220, 13.5],
    ].map(([x, w]) =>
      [
        [184.5, 13.5],
        [199.5, 27],
        [228, 13.5],
      ].map(([y, h]) => <rect key={`${x}-${y}`} x={x} y={y} width={w} height={h} rx="1" />),
    )}
    <text x="1205" y="219" textAnchor="middle" fontSize="13" fontWeight="700" fill="#4fc04b" stroke="none">
      -y
    </text>
  </g>
);

const Model = () => (
  <svg viewBox="776 156 486 943" className="block min-h-0 w-full flex-1" fill="none">
    <defs>
      <linearGradient id="plate" x1="0" y1="0" x2="0" y2="1">
        <stop offset="0" stopColor="#a4a67b" />
        <stop offset="0.500" stopColor="#a6a17c" />
        <stop offset="1" stopColor="#a4a57c" />
      </linearGradient>
      <radialGradient id="shade">
        <stop offset="0.600" stopColor="#76774f" stopOpacity="0.500" />
        <stop offset="1" stopColor="#8f9068" stopOpacity="0" />
      </radialGradient>
      <linearGradient id="rim" x1="0" y1="0" x2="0" y2="1">
        <stop offset="0" stopColor="#b55c26" />
        <stop offset="0.600" stopColor="#a04c1c" />
        <stop offset="1" stopColor="#7b3912" />
      </linearGradient>
    </defs>

    <Cube />

    <rect x="823.500" y="327.500" width="283" height="495.500" fill="url(#plate)" stroke="#bdbdbd" />
    {boltRows.map((cy) =>
      boltCols.map((cx) => (
        <g key={`${cx}-${cy}`}>
          <ellipse cx={cx + 2} cy={cy - 3} rx="38" ry="35" fill="url(#shade)" />
          <circle cx={cx} cy={cy} r="26" fill="url(#rim)" />
          <circle cx={cx} cy={cy} r="23.500" fill="#ab5420" />
          <path d={`M${cx - 16} ${cy - 19}q4-4 8-5l-2 3-4 2z`} fill="#f08b3b" />
        </g>
      )),
    )}

    <g stroke="#bdb5b5" strokeWidth="1">
      <path d="M824 424h282.500v10.500H824Z" fill="#f2caa2" />
      <path d="M824 454.500h110.500v10H824ZM996 454.500h110.500v10H996Z" fill="#b1765a" />
      <path d="M824 686.500h110.500v10.500H824ZM996 686.500h110.500v10.500H996Z" fill="#f2caa2" />
      <path d="M824 717h282.500v10.500H824Z" fill="#b57a5b" />
      <path d="M952.500 479h7v193.500h-7Z" fill="#f2a67f" />
      <path d="M971 479h6.500v193.500H971Z" fill="#af795d" />
      <path
        d="M824 434.500h282.500v19.500H995a24 24 0 0 0-24 24V673a24 24 0 0 0 24 24h111.500v19.500H824V697h111.500a24 24 0 0 0 24-24V478a24 24 0 0 0-24-24H824Z"
        fill="#5653bd"
      />
    </g>

    <g stroke="#cfcfd1" strokeWidth="1.4">
      <path d="M1112 327.700h129.500M1112 823.300h129.500" />
      <path d="M1107 381h63.500M1107 499h63.500M1107 652.300h63.500M1107 770h63.500" />
      <path d="M1112 434h42M1175.500 434h30.500M1112 717h42M1175.500 717h30.500" />
    </g>
    <path d="M823.700 823v134.500M1106.500 823v134.500M894.500 823v64M1036 823v64" stroke="#b3b3b5" />

    <VDim at={1165.5} from={328} to={381} text="45" />
    <VDim at={1165.5} from={381} to={499} text="100" />
    <VDim at={1165.5} from={499} to={652} text="130" />
    <VDim at={1165.5} from={652} to={770} text="100" />
    <VDim at={1165.5} from={770} to={823} text="45" />
    <VDim at={1201} from={328} to={434} text="90" />
    <VDim at={1201} from={434} to={717} text="240" />
    <VDim at={1201} from={717} to={823} text="90" />
    <VDim at={1236.5} from={328} to={823} text="420" />
    <HDim at={882} from={824} to={894.5} text="60" />
    <HDim at={882} from={894.5} to={1036} text="120" />
    <HDim at={882} from={1036} to={1106.5} text="60" />
    <HDim at={917.5} from={824} to={1106.5} text="240" />
    <HDim at={952.5} from={824} to={1106.5} text="240" />

    <path d="M837 1033h32" stroke="#fe0000" strokeWidth="2" />
    <path d="M866 1029v8l11-4Z" fill="#fe0000" />
    <path d="M837 1033v32" stroke="#0000a0" strokeWidth="2" />
    <path d="M833 1062h8l-4 11Z" fill="#000078" />
    <circle cx="837" cy="1033" r="3.800" fill="#22d800" stroke="#5f9b10" />
    <text x="887" y="1037" textAnchor="middle" fontSize="13" fill="#fe0000">
      X
    </text>
    <text x="836" y="1087" textAnchor="middle" fontSize="13" fill="#000080">
      Z
    </text>
  </svg>
);

/* small corner marker of a button that opens a menu */
const MenuMark = () => (
  <svg viewBox="0 0 5 24" className="h-6 w-[5px] shrink-0 bg-[#cce4f7]">
    <path d="M0 10h4v4Z" fill="#111" />
  </svg>
);

const axisViews: AxisIconProps[] = [
  { label: "X", dot: "#f7e21b", across: "#12a14b", down: "#1338c9" },
  { label: "-Y", dot: "#12a14b", across: "#d43a10", down: "#1338c9" },
  { label: "Z", dot: "#f7e21b", across: "#d43a10", down: "#12a14b" },
  { label: "-Z", dot: "#1338c9", across: "#d43a10", down: "#12a14b", up: true },
];

const ViewPanel = () => (
  <section className="flex min-h-0 flex-col bg-white">
    <Model />
    <div className="mb-[5px] flex h-6 shrink-0 px-1.5">
      <IconButton title="Ansicht wechseln" className="border border-[#005a9e] bg-[#cce4f7]">
        <SwapViewIcon />
      </IconButton>
      <div className="ml-[22px] flex">
        <IconButton title="Anzeige">
          <ListViewIcon />
        </IconButton>
        <MenuMark />
        <IconButton title="Abmessungen">
          <RulerIcon />
        </IconButton>
      </div>
      <div className="ml-[13px] flex gap-1">
        {axisViews.map((v) => (
          <IconButton key={v.label} title={`Ansicht ${v.label}`}>
            <AxisIcon {...v} />
          </IconButton>
        ))}
        <div className="flex">
          <IconButton title="Volumen">
            <SolidIcon />
          </IconButton>
          <MenuMark />
          <IconButton title="Drahtmodell">
            <WireCubeIcon />
          </IconButton>
          <MenuMark />
          <IconButton title="Drucken">
            <PrinterIcon />
          </IconButton>
          <svg viewBox="0 0 14 24" className="h-6 w-3.5 bg-[#cce4f7]">
            <path d="M1 10h8l-4 5Z" fill="#111" />
          </svg>
          <IconButton title="DXF-Export">
            <DxfIcon />
          </IconButton>
        </div>
        <IconButton title="Zoom zurücksetzen">
          <ZoomOffIcon />
        </IconButton>
      </div>
      <div className="ml-auto">
        <IconButton title="Navigator">
          <PanelIcon />
        </IconButton>
      </div>
    </div>
  </section>
);

/* ---------- visibility tree ---------- */

interface TreeItem {
  text: string;
  depth: number;
  open?: boolean;
  on?: boolean;
  selected?: boolean;
  marked?: boolean;
}

const tree: TreeItem[] = [
  { text: "Stab 1, 7", depth: 0, open: true, selected: true },
  { text: "Vollmodell", depth: 1, on: true },
  { text: "Im Hintergrund", depth: 1 },
  { text: "Konturen", depth: 1, on: true },
  { text: "Stab 2", depth: 0, open: true, on: true },
  { text: "Vollmodell", depth: 1, on: true },
  { text: "Im Hintergrund", depth: 1 },
  { text: "Konturen", depth: 1, on: true },
  { text: "Stirnplatte 1", depth: 0, open: true, on: true },
  { text: "Blech", depth: 1, open: true, on: true },
  { text: "Vollmodell", depth: 2, on: true },
  { text: "Im Hintergrund", depth: 2 },
  { text: "Konturen", depth: 2, on: true },
  { text: "Abmessungen", depth: 2, on: true, marked: true },
  { text: "Schrauben", depth: 1, open: true, on: true },
  { text: "Vollmodell", depth: 2, on: true },
  { text: "Im Hintergrund", depth: 2 },
  { text: "Konturen", depth: 2 },
  { text: "Schweißnähte", depth: 1, open: true, on: true },
  { text: "Vollmodell", depth: 2, on: true },
  { text: "Im Hintergrund", depth: 2 },
  { text: "Konturen", depth: 2, on: true },
  { text: "Steife 1", depth: 0, open: true },
  { text: "Bleche", depth: 1, open: true, on: true },
  { text: "Vollmodell", depth: 2, on: true },
  { text: "Im Hintergrund", depth: 2 },
  { text: "Konturen", depth: 2, on: true },
  { text: "Schweißnähte", depth: 1, open: true, on: true },
  { text: "Vollmodell", depth: 2, on: true },
  { text: "Im Hintergrund", depth: 2 },
  { text: "Konturen", depth: 2, on: true },
];

const indents = ["pl-3.5", "pl-[39px]", "pl-16"];

const Marker = () => (
  <>
    <span className="pointer-events-none absolute -top-1 -left-[9px] h-[31px] w-[127px] border-[6px] border-[#0aaf92]" />
    <svg viewBox="0 0 154 54" className="pointer-events-none absolute top-1.5 right-full mr-2 h-[54px] w-[154px]">
      <path d="M154 4.500 16 44" stroke="#0aaf92" strokeWidth="6.5" />
      <path d="M0 48 15.500 34.500 20 52Z" fill="#0aaf92" />
    </svg>
  </>
);

const TreePanel = () => (
  <ul className="bg-white pt-[11px] pr-[11px]">
    {tree.map((item, i) => (
      <li key={i} className={`flex h-[23px] items-center gap-1.5 ${indents[item.depth]}`}>
        {item.open ? (
          <button type="button" aria-label={`${item.text} einklappen`} className="w-4 shrink-0">
            <svg viewBox="0 0 16 16" className="block size-4" fill="none">
              <path d="M4 5.500 8.500 10 13 5.500" stroke="#222" strokeWidth="1.5" />
            </svg>
          </button>
        ) : (
          <span className="w-4 shrink-0" />
        )}
        <div
          className={`relative flex h-[23px] flex-1 items-center gap-[7px] border pl-0.5 ${
            item.selected ? "rounded-[1px] border-[#0078d4] bg-[#cce8ff]" : "border-transparent"
          }`}
        >
          <Check id={`tree-${i}`} checked={item.on} />
          <label htmlFor={`tree-${i}`} className="pt-0.5">
            {item.text}
          </label>
          {item.marked && (
            <span className="absolute top-0 left-0">
              <Marker />
            </span>
          )}
        </div>
      </li>
    ))}
  </ul>
);

/* ---------- footer ---------- */

const DialogButton = ({ text, primary = false }: { text: string; primary?: boolean }) => (
  <button
    type="button"
    className={`h-[26px] w-[101px] rounded-[4px] border bg-[#fdfdfd] pt-0.5 ${
      primary ? "border-[#0078d4]" : "border-[#d0d0d0]"
    }`}
  >
    {text}
  </button>
);

const Footer = () => (
  <footer className="relative flex h-[51px] shrink-0 items-start bg-white px-[11px] pt-3">
    <div className="flex gap-[13px]">
      <IconButton title="Hilfe">
        <HelpIcon />
      </IconButton>
      <IconButton title="Einheiten">
        <UnitsIcon />
      </IconButton>
      <div className="flex gap-1">
        <button type="button" title="Farbe" className="size-6 border border-black bg-[#ccffff]" />
        <IconButton title="Darstellung">
          <DisplayPropsIcon />
        </IconButton>
      </div>
      <IconButton title="Ansicht">
        <MonitorIcon />
      </IconButton>
      <div className="flex gap-1">
        <IconButton title="Vorlage laden">
          <SaveProfileIcon />
        </IconButton>
        <IconButton title="Vorlage speichern">
          <SaveProfileIcon red />
        </IconButton>
      </div>
      <IconButton title="Formel" className="bg-[#e5e5e5]">
        <FormulaIcon />
      </IconButton>
    </div>
    <div className="ml-auto flex gap-3 pt-px pr-px">
      <DialogButton text="OK" primary />
      <DialogButton text="Abbrechen" />
      <DialogButton text="Anwenden" />
    </div>
    <svg viewBox="0 0 12 12" className="absolute right-0.5 bottom-0.5 size-3" fill="#b9b9b9">
      <path d="M8 0h3v3H8zM8 4h3v3H8zM4 4h3v3H4zM8 8h3v3H8zM4 8h3v3H4zM0 8h3v3H0z" />
    </svg>
  </footer>
);

export default function App() {
  return (
    <div className="h-screen bg-[#d8d8da] font-['Noto_Sans',sans-serif] text-[12px] leading-4 text-black">
      <div className="flex h-full flex-col overflow-hidden rounded-[9px] border border-[#aeaeb2] bg-[#d1d1d6]">
        <TitleBar />
        <main className="flex min-h-0 flex-1 gap-[13px] px-[11px] pt-[11px] pb-2.5">
          <ListPanel />
          <div className="flex min-w-0 flex-1 flex-col">
            <HeaderFields />
            <Tabs />
            <div className="grid min-h-0 flex-1 grid-cols-[477px_minmax(0,1fr)_302px] grid-rows-[minmax(0,1fr)] gap-[13px] bg-[#ebebeb] px-[11px] pt-[11px] pb-2.5">
              <div className="flex min-h-0 flex-col">
                <ComponentsPanel />
                <SettingsPanel />
              </div>
              <ViewPanel />
              <TreePanel />
            </div>
          </div>
        </main>
        <Footer />
      </div>
    </div>
  );
}
